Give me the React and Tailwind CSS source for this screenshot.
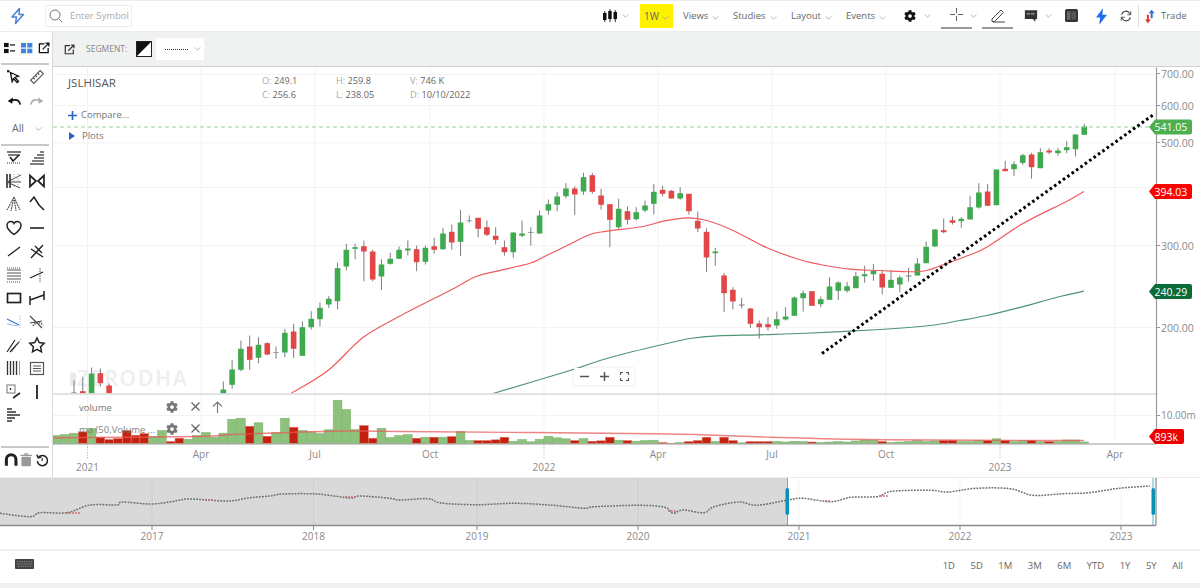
import { useId } from "react";
import { FaCog } from "react-icons/fa";

// candle: [index, colour, body top, body bottom, wick top, wick bottom] in page px
const candles = [
  [0,"x",392,393,380,393],[1,"r",390.7,393,376.7,393],[2,"g",373,393,367,393],[3,"r",372.7,382.7,368,386],[4,"r",385,393,383,393],
  [17,"g",389,393,381,393],[18,"g",369,384.3,359.3,388.3],[19,"g",348.3,369.3,340,370.7],[20,"r",346,359.3,335,369.3],[21,"g",344.3,357.3,336.7,362.7],
  [22,"r",342.7,354,341.7,354.7],[23,"x",351.7,352.4,346,358.3],[24,"g",332.3,352,328.3,356.7],[25,"r",331,348.3,323.3,357.3],[26,"g",326.7,355.3,321,355.3],
  [27,"g",318.3,326.7,310.7,329],[28,"g",307.3,318.7,302,326],[29,"g",298.3,304,295.7,307.3],[30,"g",267.7,300.7,262.3,308.7],[31,"g",249.3,266,243.3,270],
  [32,"g",246.7,248.3,243.3,258.7],[33,"r",245.7,251,240.3,280.7],[34,"r",251,279,249,280.7],[35,"g",264,276,258.7,289.3],[36,"g",258.3,263.3,252.3,264],
  [37,"g",249.3,258.3,246,258.3],[38,"g",248,250,240,255],[39,"r",248.7,261.7,245,270.7],[40,"g",247.3,261.3,245,264],[41,"r",245.7,249.3,237.3,253.3],
  [42,"g",233,248.7,227.3,249.3],[43,"r",231.3,242,224,249.3],[44,"g",222,241.3,209.3,255.7],[45,"x",220,220.7,215,222.3],[46,"r",217.3,228.3,217.3,236.7],
  [47,"r",226.7,234.3,220,235.7],[48,"r",235.3,239.3,226.7,244],[49,"r",246.7,251.7,240,255],[50,"g",232,251.7,232,257.3],[51,"g",233,235.3,220,236.7],
  [52,"x",231.7,232.4,226.7,245.3],[53,"g",215,233,210,233],[54,"g",203.7,210,199,214],[55,"g",196,204.3,191.7,210.7],[56,"g",188,195.7,182.7,197.7],
  [57,"r",188,194,185.7,214.3],[58,"g",176.7,191,172.3,194.3],[59,"r",174.7,191.3,172.3,193.3],[60,"r",195,204.3,188.3,209],[61,"r",203.7,219.3,203.7,246.7],
  [62,"g",208.3,226.7,198.3,228.3],[63,"r",210.7,219.3,206,224],[64,"g",211.7,218.7,206.7,220],[65,"g",205,210,200,211.7],[66,"g",191.3,203.3,183.3,214],
  [67,"r",189.3,193.3,185,196],[68,"r",190.3,198,189.3,198.3],[69,"g",192.7,198,186.7,199.3],[70,"r",193.3,210.7,193.3,214.3],[71,"r",220.3,228,211,231.7],
  [72,"r",231.3,257,227.7,271.3],[73,"g",251,252.7,247.3,265.3],[74,"r",275,292.7,272.3,311.7],[75,"r",289.3,301,286.7,308.7],[76,"x",304,305,297.3,308],
  [77,"r",308,323.3,307.3,327.3],[78,"r",323,326.7,320,338.3],[79,"r",323.7,326.7,316.7,330],[80,"g",318.7,325,311,328.3],[81,"g",316,319,306.7,320],
  [82,"g",297,315.3,296,315.3],[83,"g",292.7,297.7,290,311],[84,"r",290.7,305.3,290.7,305.3],[85,"g",298.7,303.7,296,306.7],[86,"g",286,299.3,276.7,299.3],
  [87,"g",282,290.3,280.7,299.3],[88,"g",285.7,290.3,281.3,292],[89,"g",275.7,287.7,271.3,287.7],[90,"g",273.7,275.7,265.3,282.3],[91,"g",270.3,273.7,263.3,280.3],
  [92,"r",273.3,287,269.3,294],[93,"g",279.3,287.3,270,287.3],[94,"g",277,284,275,291.7],[95,"x",275,276,267.3,281],[96,"g",263,275,257.7,275],
  [97,"g",246.3,262.7,241,262.7],[98,"g",229,246,228.3,246],[99,"r",229.7,231.7,218,232.7],[100,"r",219.7,222.3,216,224],[101,"g",218.3,220.7,216.7,227.3],
  [102,"g",206.7,219,195.3,219],[103,"g",192,207,182.7,208],[104,"r",191,205.3,183.3,205.3],[105,"g",169,204.7,169,204.7],[106,"r",168.3,170.7,160.3,170.7],
  [107,"g",163.7,168.7,160.7,175.3],[108,"g",154.7,162.3,153.3,164.3],[109,"r",154,166.7,152.3,178.3],[110,"g",151.7,167.7,147.7,167.7],[111,"r",150,152,147.7,153.7],
  [112,"g",150,152.7,147.3,155.3],[113,"g",146.7,149.7,140.7,152.7],[114,"g",134,148.7,134,156],[115,"g",126,134.3,123.3,134.3],
];

// volume bar tops, index -2 upward; redBars marks the red ones
const volumeTops = [
  435,434,432.7,431.3,428,436.7,439,438,430,434.7,433,436,430,441,437.7,438.7,435,432,436.7,432.7,418.7,417.7,425.7,422.3,435.7,432.3,417.7,426.7,430,431.3,433,429.3,399.7,409,429,425,437.7,427.7,437,435,
  434,437.7,436.7,436.7,436.7,436,431,440,440,440,439.3,436.7,440.7,439,441.3,438.7,435.7,437.3,438.3,440,438,440.7,440.3,436.7,439.7,440,440.7,440,439.7,442,442.7,442,441,440,436.7,440.7,436.7,440,442.3,441,441,441,
  441,441.5,440.7,441,441.5,442,441.5,441,441.5,440.5,439.5,439.7,441,442,441.5,441,440,441,440.5,440,439.7,441,441,440,440,438.3,440,441,440,440,441,441,441,439.5,439.5,441.5,
];
const redBars = new Set([1,3,4,5,6,7,8,11,12,20,22,25,33,34,39,41,43,46,47,48,49,57,59,60,61,63,67,68,70,71,72,74,75,77,78,79,84,92,99,100,104,106,109,111]);

const redMa = [[291,393],[328,370],[363,337],[400,315.5],[450,290],[476,276],[497,270.7],[530,262.7],[543,256.7],[567,245],[590,234],[607,230.7],[643,226],[663,220.7],[687,217.3],[707,220],[733,230],[767,247.3],[800,259.3],[820,264],[850,268.7],[880,270],[920,271],[943,264.3],[970,254.3],[988,246],[1023,223],[1067,200.7],[1084,191]];
const greenMa = [[493,393],[570,370],[600,360],[633,351],[667,343],[690,338],[717,335.3],[760,334.3],[800,333],[880,329],[930,325],[960,320],[987,315],[1017,307.7],[1060,296],[1084,290.7]];
const volMa = [[53,437.3],[200,436],[233,434],[333,430.7],[400,431],[655,433.3],[772,436.7],[885,439.3],[1084,440]];
const navLine = [[0,513.3],[30,516.7],[40,512.7],[67,512.7],[90,505],[117,505],[122,502],[150,504],[170,502],[187,499],[207,500],[230,501],[250,497.7],[270,496],[283,494],[317,494],[350,498],[360,496],[390,498.3],[400,500],[428,498.7],[441,503],[476,504.7],[515,503.3],[553,505.3],[584,508.3],[594,506.7],[640,505.3],[665,507.3],[673,513.3],[683,510],[704,512.7],[714,506.7],[739,502],[757,505.3],[788,500],[803,498.3],[831,501.7],[851,497.3],[877,496.7],[892,491.3],[931,490.3],[948,492],[976,488.3],[1010,488.7],[1033,495.3],[1063,493.7],[1089,492.7],[1119,488.3],[1150,486]];

const gridX = [87.5, 201, 315, 430, 544, 658, 772, 886, 1000, 1115];
const gridY = [74, 105, 142.5, 187, 245, 327, 415];
const monthLabels = [[201,"Apr"],[315,"Jul"],[430,"Oct"],[658,"Apr"],[772,"Jul"],[886,"Oct"],[1115,"Apr"]];
const yearLabels = [[87.5,"2021"],[544,"2022"],[1000,"2023"]];
const priceLabels = [[73,"700.00"],[105,"600.00"],[142,"500.00"],[245,"300.00"],[327,"200.00"]];
const navYears = [[152,"2017"],[313.5,"2018"],[477,"2019"],[638,"2020"],[799,"2021"],[960,"2022"],[1121,"2023"]];
const ranges = ["1D","5D","1M","3M","6M","YTD","1Y","5Y","All"];

const cx = (i) => 74 + 8.785 * i;

// catmull-rom through the read-off points
const smooth = (pts) => {
  let d = `M${pts[0][0]} ${pts[0][1]}`;
  for (let i = 0; i < pts.length - 1; i++) {
    const p0 = pts[i - 1] || pts[i];
    const p1 = pts[i];
    const p2 = pts[i + 1];
    const p3 = pts[i + 2] || p2;
    const c1x = p1[0] + (p2[0] - p0[0]) / 6;
    const c1y = p1[1] + (p2[1] - p0[1]) / 6;
    const c2x = p2[0] - (p3[0] - p1[0]) / 6;
    const c2y = p2[1] - (p3[1] - p1[1]) / 6;
    d += `C${c1x} ${c1y} ${c2x} ${c2y} ${p2[0]} ${p2[1]}`;
  }
  return d;
};

const Chev = ({ className = "" }) => (
  <svg width="7" height="4" viewBox="0 0 8 5" className={`shrink-0 ${className}`}>
    <path d="M.5.5 4 4 7.5.5" fill="none" stroke="#999" strokeWidth=".9" />
  </svg>
);

const NavItem = ({ label, width, className }) => (
  <div className={`flex items-center gap-[4px] text-[9.5px] text-[#666] ${className}`}>
    <span className={width}>{label}</span>
    <Chev className="mt-[3px]" />
  </div>
);

const Tool = ({ children }) => (
  <svg width="20" height="20" viewBox="0 0 20 20" fill="none" stroke="#222" strokeWidth="1.4">
    {children}
  </svg>
);

const toolRows = [
  [
    <><path d="M3 4h14M4 7h12" stroke="#555" /><path d="M6 9l3 4 6-6" strokeWidth="1.5" /><path d="M3 15h14" stroke="#777" strokeDasharray="1 1" /></>,
    <><path d="M13 4h4M10 7h7M7 10h10M5 13h12M3 16h14" stroke="#555" strokeWidth="1.5" /></>,
  ],
  [
    <><path d="M3 3v14M6 3v14" strokeWidth="1.5" /><path d="M3 11l14-7M3 11l14 0M3 11l13 6" strokeWidth="1" stroke="#444" /><path d="M10 3v14M14 3v14" stroke="#aaa" strokeWidth="1" strokeDasharray="1 1" /></>,
    <><path d="M3 4.5v11L9 10zM17 4.5v11L11 10z" strokeWidth="1.7" /></>,
  ],
  [
    <><path d="M10 3L3 16M10 3l-3 14M10 3l2 14M10 3l6 13" stroke="#555" strokeWidth="1.1" strokeDasharray="2 .6" /></>,
    <><path d="M3 8l4-5 5 8 5 5" strokeWidth="1.5" /></>,
  ],
  [
    <><path d="M10 16.5C5 13 3 10.500 3 7.500 3 5 5 3.500 7 3.500 8.500 3.500 9.500 4.500 10 5.500 10.500 4.500 11.500 3.500 13 3.500 15 3.500 17 5 17 7.500 17 10.500 15 13 10 16.500z" strokeWidth="1.5" /></>,
    <><path d="M3 10h14" strokeWidth="1.6" /></>,
  ],
  [
    <><path d="M4 15L16 6" strokeWidth="1.3" /></>,
    <><path d="M4 17L16 4M4 8l12 8M8 5l7 7" strokeWidth="1.4" /></>,
  ],
  [
    <><path d="M3 5h14M3 8h14M3 11h14M3 14h14" stroke="#555" strokeWidth="1.2" /><path d="M3 17h14M3 3h14" stroke="#888" strokeDasharray="1 1" /></>,
    <><path d="M3 13l13-6" strokeWidth="1.3" /><path d="M13 3v14" stroke="#555" strokeDasharray="1.500 1" strokeWidth="1" /></>,
  ],
  [
    <><rect x="3.500" y="5.500" width="13" height="9" strokeWidth="1.7" /></>,
    <><path d="M3 8v9M17 3v9M3 12l14-5" strokeWidth="1.5" /></>,
  ],
  [
    <><path d="M3 8l12 6" stroke="#3a78d8" strokeWidth="1.3" /><path d="M3 13l11 2" stroke="#9cc0ee" strokeWidth="1.1" /><path d="M16 4v13" stroke="#9cc0ee" strokeDasharray="1 1" strokeWidth="1" /></>,
    <><path d="M3 5l12 12M3 12l12-2" stroke="#444" strokeWidth="1.1" /><path d="M6 15a6 6 0 0 1 10-1" stroke="#555" strokeDasharray="1.500 .8" /></>,
  ],
  [
    <><path d="M3 17L11 5M6 17l9-10" strokeWidth="1.2" /><path d="M8 17l9-13" stroke="#888" strokeWidth="1" strokeDasharray="1.500 1" /></>,
    <><path d="M10 3l2.200 4.600 5 .7-3.600 3.500.9 5L10 14.400l-4.500 2.400.9-5L2.800 8.300l5-.7z" strokeWidth="1.5" /></>,
  ],
  [
    <><path d="M3.500 3v14M6.500 3v14M9.500 3v14M12.500 3v14" strokeWidth="1.3" stroke="#333" /><path d="M15.500 3v14" stroke="#999" strokeWidth="1" /></>,
    <><rect x="3.500" y="4.500" width="13" height="12" stroke="#555" strokeWidth="1.200" /><path d="M6 8h8M6 10.500h8M6 13h8" stroke="#555" strokeWidth="1" /></>,
  ],
  [
    <><rect x="3" y="3" width="8" height="8" stroke="#777" strokeWidth="1" /><path d="M6.500 6v2" strokeWidth="1.200" /><path d="M9 16l7-5" strokeWidth="1.600" /></>,
    <><path d="M10 3v14" strokeWidth="1.800" /></>,
  ],
  [
    <><path d="M3 4h5M3 7h9M3 10h13M3 13h8M3 16h5" stroke="#333" strokeWidth="1.700" /></>,
    null,
  ],
];

const Sidebar = () => (
  <div className="w-[53px] shrink-0 border-r border-[#d9d9d9] bg-white flex flex-col">
    <div className="h-[33px] flex items-center pl-[3px] gap-[4px] border-b-2 border-[#c9c9c9] mx-[1px] w-[48px] pt-[1px]">
      <svg width="12" height="12" viewBox="0 0 13 13" className="shrink-0" fill="#111"><rect x="0" y="1" width="5" height="4.500" /><rect x="0" y="7.500" width="5" height="4.500" /><rect x="6.500" y="2.500" width="5.500" height="1.300" /><rect x="6.500" y="9" width="5.500" height="1.300" /></svg>
      <svg width="12" height="12" viewBox="0 0 13 13" className="shrink-0 ml-[1px]" fill="#3d86e0"><rect x="0" y="1" width="5.500" height="5" /><rect x="6.800" y="1" width="5.500" height="5" /><rect x="0" y="7.200" width="5.500" height="5" /><rect x="6.800" y="7.200" width="5.500" height="5" /></svg>
      <svg width="12" height="12" viewBox="0 0 13 13" className="shrink-0 ml-[1px]" fill="none" stroke="#111" strokeWidth="1.400"><path d="M7 2H1.500v9.500H11V6.500" /><path d="M5 8l6.500-6.500M8 1.200h3.800V5" /></svg>
    </div>
    <div className="grid grid-cols-2 w-[48px] pl-[3px] gap-x-[1px] auto-rows-[24px] items-center justify-items-center">
      <svg width="18" height="18" viewBox="0 0 20 20" fill="none" stroke="#111" strokeWidth="1.500"><path d="M6 5l9 4-4 1.500 4 4.500-1.500 1.300-4-4.500L8 15z" /><rect x="2.500" y="2.500" width="2" height="2" fill="#111" strokeWidth=".5" /></svg>
      <svg width="18" height="18" viewBox="0 0 20 20" fill="none" stroke="#555" strokeWidth="1.300"><path d="M3 13.500L13.500 3 17 6.500 6.500 17z" /><path d="M6 11l1.500 1.500M8.500 8.500L10 10M11 6l1.500 1.500" /></svg>
      <svg width="18" height="18" viewBox="0 0 20 20" fill="none" stroke="#111" strokeWidth="1.800"><path d="M17 14c-1-4-4-6-8-5l-4 1" /><path d="M3 10l6-4-1 7z" fill="#111" stroke="none" /></svg>
      <svg width="18" height="18" viewBox="0 0 20 20" fill="none" stroke="#aaa" strokeWidth="1.600"><path d="M3 14c1-4 4-6 8-5l4 1" /><path d="M17 10l-6-4 1 7z" fill="#aaa" stroke="none" /></svg>
    </div>
    <div className="h-[33px] w-[48px] flex items-center pl-[11px] gap-[11px] text-[10.5px] text-[#666] border-b-2 border-[#c9c9c9] mx-[1px]">
      <span>All</span>
      <Chev />
    </div>
    <div className="grid grid-cols-2 w-[48px] pl-[3px] gap-x-[1px] auto-rows-[23.400px] items-center justify-items-center">
      {toolRows.flat().map((t, i) => (
        <div key={i} className="h-[20px] w-[20px]">{t && <Tool>{t}</Tool>}</div>
      ))}
    </div>
    <div className="mt-auto h-[31px] w-[48px] border-t-2 border-[#c9c9c9] mx-[1px] flex items-center pl-[3px] gap-[1px] pb-[5px]">
      <svg width="15" height="16" viewBox="0 0 15 16" fill="none"><path d="M2.500 14V7.500a5 5 0 0 1 10 0V14" stroke="#222" strokeWidth="3.200" /></svg>
      <svg width="15" height="16" viewBox="0 0 15 16" fill="#999"><rect x="2.500" y="4.500" width="10" height="10" rx="1" /><rect x="1.500" y="2.500" width="12" height="1.300" /><rect x="5.500" y="1" width="4" height="1.500" /></svg>
      <svg width="15" height="16" viewBox="0 0 15 16" fill="none" stroke="#222" strokeWidth="1.600"><path d="M3.500 5.500a5.300 5.300 0 1 1-1 3.500" /><path d="M2 2.500l1.300 3.300 3.300-1" /><path d="M7.500 6v3" strokeWidth="1.200" /></svg>
    </div>
  </div>
);

const TopBar = () => (
  <div className="h-[32px] shrink-0 bg-white border-t border-b border-[#ececec] flex items-center text-[#666]">
    <svg width="18" height="18" viewBox="0 0 18 18" fill="none" stroke="#4a7fd8" strokeWidth="1.500" className="ml-[9px] shrink-0">
      <path d="M10.500 1.500L3 10h4.500l-1 6.500L14.500 7.500H10z" strokeLinejoin="round" />
    </svg>
    <div className="ml-[18px] w-[87px] h-[22px] shrink-0 border border-[#eeeeee] flex items-center pl-[3px] gap-[7px]">
      <svg width="14" height="14" viewBox="0 0 14 14" fill="none" stroke="#777" strokeWidth="1" className="shrink-0"><circle cx="6" cy="6" r="5" /><path d="M9.500 9.500L13 13" /></svg>
      <span className="text-[9.5px] text-[#aaa] whitespace-nowrap">Enter Symbol</span>
    </div>
    <svg width="16" height="16" viewBox="0 0 16 16" className="ml-[470px] shrink-0" fill="#111">
      <rect x="1" y="5" width="3.500" height="7" /><rect x="6.200" y="3" width="3.500" height="8" /><rect x="11.500" y="4" width="3.500" height="7" />
      <path d="M2.750 3v11M8 1v13M13.250 2v12" stroke="#111" strokeWidth=".9" />
    </svg>
    <Chev className="ml-[4px]" />
    <div className="ml-[11px] w-[33px] h-[24px] shrink-0 bg-[#fff200] flex items-center justify-center gap-[3px] text-[10px] text-[#666]">
      <span>1W</span>
      <Chev className="mt-[3px]" />
    </div>
    <NavItem label="Views" width="w-[25px]" className="ml-[10px]" />
    <NavItem label="Studies" width="w-[33px]" className="ml-[14px]" />
    <NavItem label="Layout" width="w-[30px]" className="ml-[14px]" />
    <NavItem label="Events" width="w-[29px]" className="ml-[14px]" />
    <FaCog size={12} color="#111" className="ml-[18px] shrink-0" />
    <Chev className="ml-[8px]" />
    <div className="ml-[10px] w-[31px] h-[27px] self-start mt-[1px] shrink-0 border-b-2 border-[#999] flex items-center justify-center">
      <svg width="15" height="15" viewBox="0 0 16 16" stroke="#555" strokeWidth="1"><path d="M8 1v5.500M8 9.500V15M1 8h5.500M9.500 8H15" /></svg>
    </div>
    <Chev className="-ml-[2px]" />
    <div className="ml-[5px] w-[31px] h-[27px] self-start mt-[1px] shrink-0 border-b-2 border-[#999] flex items-center justify-center">
      <svg width="16" height="16" viewBox="0 0 16 16" fill="none" stroke="#444" strokeWidth="1"><path d="M2 12L11 3l2.500 2.500-9 9H2zM3 15h12" /></svg>
    </div>
    <svg width="14" height="13" viewBox="0 0 16 14" className="ml-[11px] -mt-[2px] shrink-0" fill="#333"><path d="M1 1h14v10h-2v3l-3-3H1z" /><rect x="3" y="4" width="4" height="2" fill="#888" /><rect x="8" y="4" width="4" height="2" fill="#888" /></svg>
    <Chev className="ml-[7px]" />
    <svg width="13" height="13" viewBox="0 0 14 14" className="ml-[13px] -mt-[1px] shrink-0"><rect width="14" height="14" rx="2" fill="#333" /><rect x="2" y="2.500" width="4" height="9" fill="#666" /><rect x="7" y="2.500" width="5" height="9" fill="#555" /></svg>
    <svg width="11" height="17" viewBox="0 0 12 18" className="ml-[18px] shrink-0" fill="#1f6ff0"><path d="M7.500 0L0 10h4.500L3.500 18 12 7H7z" /></svg>
    <svg width="12" height="14" viewBox="0 0 14 15" fill="none" stroke="#444" strokeWidth="1.300" className="ml-[13px] shrink-0"><path d="M2 6a5 5 0 0 1 9-2l1.500 2M12 9a5 5 0 0 1-9 2L1.500 9" /><path d="M12.500 2v4h-4M1.500 13V9h4" strokeWidth="1" /></svg>
    <div className="ml-[6px] h-[22px] w-px bg-[#ddd] shrink-0" />
    <svg width="10" height="15" viewBox="0 0 12 16" className="ml-[6px] shrink-0"><path d="M8 0l3.500 4H9.200v6H6.800V4H4.500z" fill="#2c6fd9" /><path d="M3.500 16L0 11.500h2.300V6h2.400v5.500H7z" fill="#e0392b" /></svg>
    <span className="ml-[6px] text-[9.5px] text-[#666]">Trade</span>
  </div>
);

const SegmentBar = () => (
  <div className="h-[35px] shrink-0 bg-[#f0f1f1] border-b border-[#cfcfcf] flex items-center">
    <svg width="11" height="11" viewBox="0 0 13 13" className="ml-[11px] shrink-0" fill="none" stroke="#333" strokeWidth="1.400"><path d="M7 2H1.500v9.500H11V6.500" /><path d="M5 8l6.500-6.500M8 1.200h3.800V5" /></svg>
    <span className="ml-[11px] w-[42px] text-[8.5px] text-[#888] whitespace-nowrap">SEGMENT:</span>
    <div className="ml-[8px] w-[16px] h-[16px] border border-[#222] bg-[linear-gradient(to_bottom_right,#111_49%,#fff_51%)]" />
    <div className="ml-[4px] w-[48px] h-[22px] bg-white flex items-center pl-[9px] gap-[6px]">
      <div className="w-[23px] border-t border-dotted border-[#333]" />
      <Chev />
    </div>
  </div>
);

const Tag = ({ y, x2, fill, label }) => (
  <g>
    <path d={`M1149 ${y}l6-7.500H${x2 - 2}q2 0 2 2V${y + 5.500}q0 2-2 2H1155z`} fill={fill} />
    <text x="1154.500" y={y + 4} fontSize="10.500" fontFamily="Open Sans, sans-serif" fill="#fff">{label}</text>
  </g>
);

const Chart = () => {
  const clip = useId();
  return (
    <svg viewBox="53 67 1147 409" className="w-full h-full block">
      <defs>
        <clipPath id={clip}><rect x="53" y="67" width="1103" height="326" /></clipPath>
      </defs>
      {gridX.map((x) => <path key={x} d={`M${x} 67V443`} stroke="#f3f3f3" />)}
      {gridY.map((y) => <path key={y} d={`M53 ${y}H1156`} stroke="#f3f3f3" />)}
      <text x="77" y="385" fontSize="21" fontFamily="Open Sans, sans-serif" fill="#eeeeee" fontWeight="600" letterSpacing="1.800">ZERODHA</text>
      <path d="M70 372h6v13h-6z" fill="#eaeaea" />

      <g clipPath={`url(#${clip})`}>
        {candles.map(([i, c, bt, bb, wt, wb]) => (
          <g key={i}>
            <path d={`M${cx(i)} ${wt}V${wb}`} stroke="#7d7d7d" strokeWidth="1" />
            <rect x={cx(i) - 2.8} y={bt} width="5.600" height={bb - bt}
              fill={c === "g" ? "#3fa94f" : c === "r" ? "#e44647" : "#7d7d7d"} />
          </g>
        ))}
        <path d={smooth(redMa)} fill="none" stroke="#ef5a5f" strokeWidth="1.200" />
        <path d={smooth(greenMa)} fill="none" stroke="#4f9471" strokeWidth="1.200" />
      </g>
      <path d="M53 126.500H1156" stroke="#9bcf9b" strokeDasharray="4 3" />
      <path d="M822 353L1155 113" stroke="#000" strokeWidth="3" strokeDasharray="2.600 2.800" />

      <path d="M53 393.500H1156" stroke="#d9d9d9" strokeWidth="1.500" />

      {volumeTops.map((t, k) => {
        const i = k - 2;
        const red = redBars.has(i);
        const x = Math.max(cx(i) - 4.39, 53);
        return (
          <rect key={i} x={x} y={t} width={cx(i) + 4.39 - x} height={443 - t}
            fill={red ? "#c4220f" : "#8dc27c"} stroke={red ? "#e37b70" : "#7ab26b"} strokeWidth=".5" />
        );
      })}
      <path d={smooth(volMa)} fill="none" stroke="#e85b5b" strokeOpacity=".75" strokeWidth="1.400" />

      <path d="M53 443.500H1156" stroke="#9a9a9a" strokeWidth="1.200" />
      <path d="M1156.500 67V443" stroke="#9a9a9a" strokeWidth="1.200" />

      {priceLabels.map(([y, t]) => (
        <g key={t}>
          <path d={`M1156 ${y}h4`} stroke="#9a9a9a" />
          <text x="1161" y={y + 4} fontSize="10.500" fontFamily="Open Sans, sans-serif" fill="#8a8a8a">{t}</text>
        </g>
      ))}
      <path d="M1156 415h4" stroke="#9a9a9a" />
      <text x="1161" y="418" fontSize="10" fontFamily="Open Sans, sans-serif" fill="#8a8a8a">10.00m</text>

      <Tag y={126.500} x2={1192} fill="#4caf50" label="541.05" />
      <Tag y={191} x2={1192} fill="#ff0000" label="394.03" />
      <Tag y={291} x2={1192} fill="#0c6b3b" label="240.29" />
      <Tag y={436} x2={1184} fill="#ee0000" label="893k" />

      {monthLabels.map(([x, t], k) => (
        <text key={k} x={x} y="457" textAnchor="middle" fontSize="10" fontFamily="Open Sans, sans-serif" fill="#8a8a8a">{t}</text>
      ))}
      {yearLabels.map(([x, t]) => (
        <g key={t}>
          <path d={`M${x} 444V458`} stroke="#aaa" strokeDasharray="1 1.500" />
          <text x={x} y="470" textAnchor="middle" fontSize="10" fontFamily="Open Sans, sans-serif" fill="#8a8a8a">{t}</text>
        </g>
      ))}
    </svg>
  );
};

const Navigator = () => (
  <div className="h-[71px] shrink-0 bg-white">
    <svg viewBox="0 478 1200 71" className="w-full h-full block">
      <rect x="0" y="478" width="787" height="47" fill="#d9d9d9" />
      {navYears.map(([x]) => <path key={x} d={`M${x} 478V530`} stroke="#000" strokeOpacity=".05" />)}
      <path d={smooth(navLine)} fill="none" stroke="#667068" strokeWidth="1.500" strokeDasharray="1.800 1.200" />
      <path d="M66 513h14M205 500h8M345 497h10M668 511h8M825 501h6M880 496h8" stroke="#c96b6b" strokeWidth="1.500" strokeDasharray="1.800 1.200" />
      <path d="M0 525.500H1156" stroke="#8d8d8d" strokeWidth="1.300" />
      <path d="M787.500 478V525M1153 478V525" stroke="#0d94bd" strokeWidth=".7" />
      <rect x="785.500" y="488" width="3.500" height="27" rx="1.700" fill="#0a8fb8" />
      <rect x="1151.500" y="488" width="3.500" height="27" rx="1.700" fill="#0a8fb8" />
      <path d="M1156 478V525" stroke="#8d8d8d" strokeWidth="1.300" />
      {navYears.map(([x, t]) => (
        <g key={t}>
          <path d={`M${x} 525V530`} stroke="#8d8d8d" />
          <text x={x} y="540" textAnchor="middle" fontSize="10" fontFamily="Open Sans, sans-serif" fill="#8a8a8a">{t}</text>
        </g>
      ))}
    </svg>
  </div>
);

const BottomBar = () => (
  <div className="h-[34px] shrink-0 bg-white flex items-center justify-between border-t-2 border-[#f0f0f0]">
    <svg width="21" height="10" viewBox="0 0 21 11" className="ml-[14px] -mt-[6px]">
      <rect width="21" height="11" rx="1" fill="#444" />
      <path d="M2 3h17M2 5.500h17M3 8h15" stroke="#aaa" strokeWidth="1" strokeDasharray="1 1" />
    </svg>
    <div className="flex items-center gap-[15.500px] pr-[17px] -mt-[2px] text-[9.5px] text-[#666]">
      {ranges.map((r) => <span key={r}>{r}</span>)}
    </div>
  </div>
);

const Close = ({ className }) => (
  <svg width="11" height="11" viewBox="0 0 11 11" className={className} stroke="#666" strokeWidth="1.300"><path d="M1.500 1.500l8 8M9.500 1.500l-8 8" /></svg>
);

const Legend = () => (
  <>
    <span className="absolute left-[15px] top-[7px] text-[11.5px] text-[#555]">JSLHISAR</span>
    <div className="absolute left-[209px] top-[8px] grid grid-cols-[74px_74px_auto] gap-y-[1px] text-[9.2px] leading-[12.5px] text-[#666]">
      <span><i className="not-italic text-[#aaa]">O:</i> 249.1</span>
      <span><i className="not-italic text-[#aaa]">H:</i> 259.8</span>
      <span><i className="not-italic text-[#aaa]">V:</i> 746 K</span>
      <span><i className="not-italic text-[#aaa]">C:</i> 256.6</span>
      <span><i className="not-italic text-[#aaa]">L:</i> 238.05</span>
      <span><i className="not-italic text-[#aaa]">D:</i> 10/10/2022</span>
    </div>
    <div className="absolute left-[15px] top-[41px] flex items-center gap-[4px] text-[9.5px] text-[#777]">
      <svg width="9" height="9" viewBox="0 0 9 9" stroke="#2b62c4" strokeWidth="1.600"><path d="M4.500 0v9M0 4.500h9" /></svg>
      <span>Compare...</span>
    </div>
    <div className="absolute left-[16px] top-[62px] flex items-center gap-[7px] text-[9.5px] text-[#777]">
      <svg width="6" height="8" viewBox="0 0 6 8" fill="#2b62c4"><path d="M0 0l6 4-6 4z" /></svg>
      <span>Plots</span>
    </div>
    <div className="absolute left-[521px] top-[301px] h-[17px] flex items-center bg-white shadow-[0_0_3px_rgba(0,0,0,0.12)]">
      <div className="w-[20px] flex justify-center"><svg width="9" height="9" viewBox="0 0 9 9" stroke="#555" strokeWidth="1.500"><path d="M0 4.500h9" /></svg></div>
      <div className="w-[20px] flex justify-center"><svg width="9" height="9" viewBox="0 0 9 9" stroke="#555" strokeWidth="1.500"><path d="M0 4.500h9M4.500 0v9" /></svg></div>
      <div className="w-[20px] flex justify-center"><svg width="9" height="9" viewBox="0 0 9 9" fill="none" stroke="#555" strokeWidth="1.200"><path d="M0.500 3V.5H3M6 .5h2.500V3M8.500 6v2.500H6M3 8.500H.5V6" /></svg></div>
    </div>
    <span className="absolute left-[26px] top-[334px] text-[9.5px] text-[#777]">volume</span>
    <FaCog size={12} color="#777" className="absolute left-[113px] top-[334px]" />
    <Close className="absolute left-[137px] top-[334px]" />
    <svg width="11" height="12" viewBox="0 0 11 12" className="absolute left-[159px] top-[334px]" fill="none" stroke="#777" strokeWidth="1.100"><path d="M5.500 12V1M1 5.500L5.500 1 10 5.500" /></svg>
    <span className="absolute left-[26px] top-[356px] text-[9.5px] text-[#777] opacity-90">ma (50,Volume ...</span>
    <FaCog size={12} color="#777" className="absolute left-[113px] top-[356px]" />
    <Close className="absolute left-[137px] top-[356px]" />
  </>
);

export default function App() {
  return (
    <div className="w-[1200px] h-[588px] overflow-hidden bg-[#f0f0f0] flex flex-col font-['Open_Sans',sans-serif]">
      <TopBar />
      <div className="h-[445px] shrink-0 flex bg-white">
        <Sidebar />
        <div className="flex-1 min-w-0 flex flex-col">
          <SegmentBar />
          <div className="relative flex-1 min-h-0">
            <Chart />
            <Legend />
          </div>
        </div>
      </div>
      <div className="h-[1px] shrink-0 bg-[#ececec]" />
      <Navigator />
      <BottomBar />
    </div>
  );
}
